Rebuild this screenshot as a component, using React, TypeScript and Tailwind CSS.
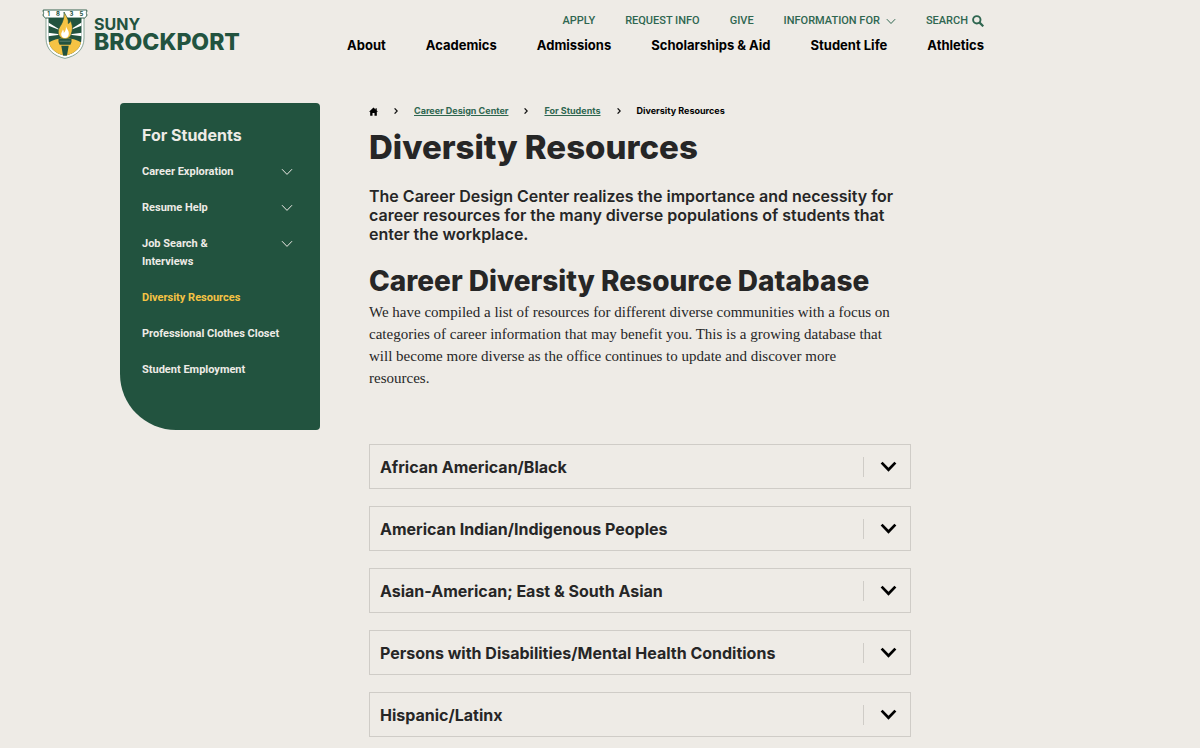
import { useState } from "react";

const mainNav = ["About", "Academics", "Admissions", "Scholarships & Aid", "Student Life", "Athletics"];

const sideLinks = [
  { label: "Career Exploration", expandable: true },
  { label: "Resume Help", expandable: true },
  { label: "Job Search & Interviews", expandable: true },
  { label: "Diversity Resources", current: true },
  { label: "Professional Clothes Closet" },
  { label: "Student Employment" },
];

const communities = [
  "African American/Black",
  "American Indian/Indigenous Peoples",
  "Asian-American; East & South Asian",
  "Persons with Disabilities/Mental Health Conditions",
  "Hispanic/Latinx",
];

function Chevron({ className }: { className: string }) {
  return (
    <svg viewBox="0 0 12 8" className={className} fill="none" stroke="currentColor" aria-hidden="true">
      <path d="M1 1.2 L6 6.4 L11 1.2" />
    </svg>
  );
}

function Shield() {
  return (
    <svg viewBox="0 0 46 50" className="h-[50px] w-[46px] shrink-0" aria-hidden="true">
      <path d="M4 8 H42 V29 C42 41 34 47 23 49.4 C12 47 4 41 4 29 Z" fill="#fff" stroke="#7d9d8d" strokeWidth="0.9" />
      <clipPath id="shield-field">
        <path d="M6.5 9 H39.5 V29 C39.5 39 33 44.5 23 46.8 C13 44.5 6.5 39 6.5 29 Z" />
      </clipPath>
      <g clipPath="url(#shield-field)">
        <rect x="5" y="8" width="36" height="42" fill="#22533f" />
        <g fill="#fff">
          <path d="M20 22 L5 12.5 V16 Z" />
          <path d="M26 22 L41 12.5 V16 Z" />
          <path d="M20 25.5 L5 23.5 V27.5 Z" />
          <path d="M26 25.5 L41 23.5 V27.5 Z" />
        </g>
        <path d="M5 35 C10 31 15 29.5 23 29.5 C31 29.5 36 31 41 35 V50 H5 Z" fill="#f6c344" />
      </g>
      <path d="M1.2 1 H44.8 V3 C44 3.4 44 4.6 44.8 5 V7 L42.5 9 H3.5 L1.2 7 V5 C2 4.6 2 3.4 1.2 3 Z" fill="#fff" stroke="#22533f" strokeWidth="0.9" />
      <g fill="#22533f" className="font-['Inter'] text-[6px] font-bold" textAnchor="middle">
        <text x="6.5" y="7.2">1</text>
        <text x="16" y="7.2">8</text>
        <text x="29.5" y="7.2">3</text>
        <text x="39.5" y="7.2">5</text>
      </g>
      <path d="M22 3 C24.5 8 27 10 26.2 14.5 C28 13.7 28.2 12.2 28 11 C31 16 30.8 20 29.6 24 C28.8 27.5 26.5 30 23 30 C19 30 16.3 27 16.2 23 C16 19 19 17 20.4 13 C21.7 9.5 22.2 7 22 3 Z" fill="#f6c344" stroke="#22533f" strokeWidth="0.7" />
      <path d="M23.8 16 C24 20 27.2 21 26.8 25 C26.5 27.5 25 29 23 29 C20.5 29 19 27 19.2 25 C19.4 23 20.6 22.5 20.8 20.5 C22 22 21.8 23 21.7 24 C23.8 22 24.3 19.5 23.8 16 Z" fill="#fff" />
      <path d="M16.5 30 H29.5 V33 L28.4 35.8 H17.6 L16.5 33 Z M19.3 36.8 H26.7 L25 46.5 H21 Z" fill="#22533f" />
      <path d="M17.5 32.2 H28.5" stroke="#7d9d8d" strokeWidth="0.6" />
    </svg>
  );
}

function Header() {
  return (
    <header className="flex w-[82%] items-start justify-between pl-[42px] pt-[9px]">
      <a href="#home" className="flex gap-[6px] text-[#22533f]">
        <Shield />
        <span className="flex flex-col pt-[6px]">
          <span className="text-[16px] font-bold leading-[18px]">SUNY</span>
          <span className="text-[23px] font-extrabold leading-[18px]">BROCKPORT</span>
        </span>
      </a>
      <div className="flex flex-col items-end gap-[4px] pt-[2px]">
        <nav aria-label="Utility" className="flex items-center gap-[30px] font-['Roboto'] text-[11px] font-medium leading-[20px] text-[#2f6650]">
          <a href="#apply">APPLY</a>
          <a href="#request">REQUEST INFO</a>
          <a href="#give">GIVE</a>
          <button type="button" className="flex items-center gap-[6px]">
            INFORMATION FOR
            <Chevron className="h-[7px] w-[10px] stroke-[1.2]" />
          </button>
          <button type="button" className="flex items-center gap-1">
            SEARCH
            <svg viewBox="0 0 12 12" className="h-3 w-3" fill="none" stroke="currentColor" strokeWidth="1.9" aria-hidden="true">
              <circle cx="4.8" cy="4.8" r="3.7" />
              <path d="M7.6 7.6 L11.3 11.3" strokeWidth="2.2" />
            </svg>
          </button>
        </nav>
        <nav aria-label="Main" className="flex gap-10 text-[13px] font-bold leading-[20px] text-black">
          {mainNav.map((item) => (
            <a key={item} href="#main">{item}</a>
          ))}
        </nav>
      </div>
    </header>
  );
}

function Sidebar() {
  return (
    <aside className="w-[200px] shrink-0 rounded bg-[#22533f] rounded-bl-[56px] px-[22px] pb-[51px] pt-[21px] text-[#eeebe6]">
      <h2 className="text-[16px] font-bold leading-[22px]">For Students</h2>
      <ul className="mt-[17px] flex flex-col gap-[18px] font-['Roboto'] text-[11px] font-bold leading-[18px]">
        {sideLinks.map((link) => (
          <li key={link.label} className="flex items-start justify-between">
            <a
              href="#section"
              className={
                link.current ? "text-[#f6c344]" : link.expandable ? "max-w-[110px]" : "whitespace-nowrap"
              }
            >
              {link.label}
            </a>
            {link.expandable && (
              <button type="button" aria-label={`Expand ${link.label}`} className="mr-[5px] flex h-[18px] items-center">
                <Chevron className="h-2 w-3" />
              </button>
            )}
          </li>
        ))}
      </ul>
    </aside>
  );
}

function Crumbs() {
  return (
    <nav aria-label="Breadcrumb" className="flex items-center text-[9px] font-bold leading-[16px] text-[#2f6650]">
      <a href="#home" aria-label="Home" className="text-black">
        <svg viewBox="0 0 10 10" className="h-[9px] w-[9px]" fill="currentColor" aria-hidden="true">
          <path d="M5 0.5 L7.3 2.7 V1.4 H8.6 V4 L10 5.4 H8.7 V9.6 H6.1 V6.6 H3.9 V9.6 H1.3 V5.4 H0 Z" />
        </svg>
      </a>
      <Separator />
      <a href="#career" className="underline">Career Design Center</a>
      <Separator />
      <a href="#students" className="underline">For Students</a>
      <Separator />
      <span aria-current="page" className="text-black">Diversity Resources</span>
    </nav>
  );
}

function Separator() {
  return (
    <svg viewBox="0 0 4 6" className="mx-4 h-[6px] w-[4px]" fill="none" stroke="#111" strokeWidth="1.3" aria-hidden="true">
      <path d="M0.6 0.4 L3.2 3 L0.6 5.6" />
    </svg>
  );
}

function Accordion() {
  const [open, setOpen] = useState<string | null>(null);
  return (
    <div className="mt-[55px] flex flex-col gap-[17px]">
      {communities.map((name) => (
        <h3 key={name}>
          <button
            type="button"
            aria-expanded={open === name}
            onClick={() => setOpen(open === name ? null : name)}
            className="flex h-[45px] w-full items-center justify-between border border-[#cfccc7] pl-[10px] text-left text-[16px] font-bold"
          >
            {name}
            <span className="flex h-5 w-[47px] items-center justify-center border-l border-[#cfccc7] pl-[2px] text-black">
              <Chevron className="h-[11px] w-[17px] stroke-2" />
            </span>
          </button>
        </h3>
      ))}
    </div>
  );
}

export default function App() {
  return (
    <div className="min-h-screen bg-[#eeebe6] font-['Inter',sans-serif] text-[#262626]">
      <Header />
      <div className="ml-[10%] mt-[44px] flex max-w-[791px] items-start gap-[49px] pb-3">
        <Sidebar />
        <main className="min-w-0 flex-1">
          <Crumbs />
          <h1 className="mt-[8px] text-[33px] font-extrabold leading-[40px]">Diversity Resources</h1>
          <p className="mt-[20px] text-[16px] font-semibold leading-[19px]">
            The Career Design Center realizes the importance and necessity for career resources for the many diverse
            populations of students that enter the workplace.
          </p>
          <h2 className="mt-[20px] text-[28px] font-extrabold leading-[34px]">Career Diversity Resource Database</h2>
          <p className="mt-[3px] pr-4 font-['Liberation_Serif',serif] text-[15px] leading-[22px]">
            We have compiled a list of resources for different diverse communities with a focus on categories of career
            information that may benefit you. This is a growing database that will become more diverse as the office
            continues to update and discover more resources.
          </p>
          <Accordion />
        </main>
      </div>
    </div>
  );
}
